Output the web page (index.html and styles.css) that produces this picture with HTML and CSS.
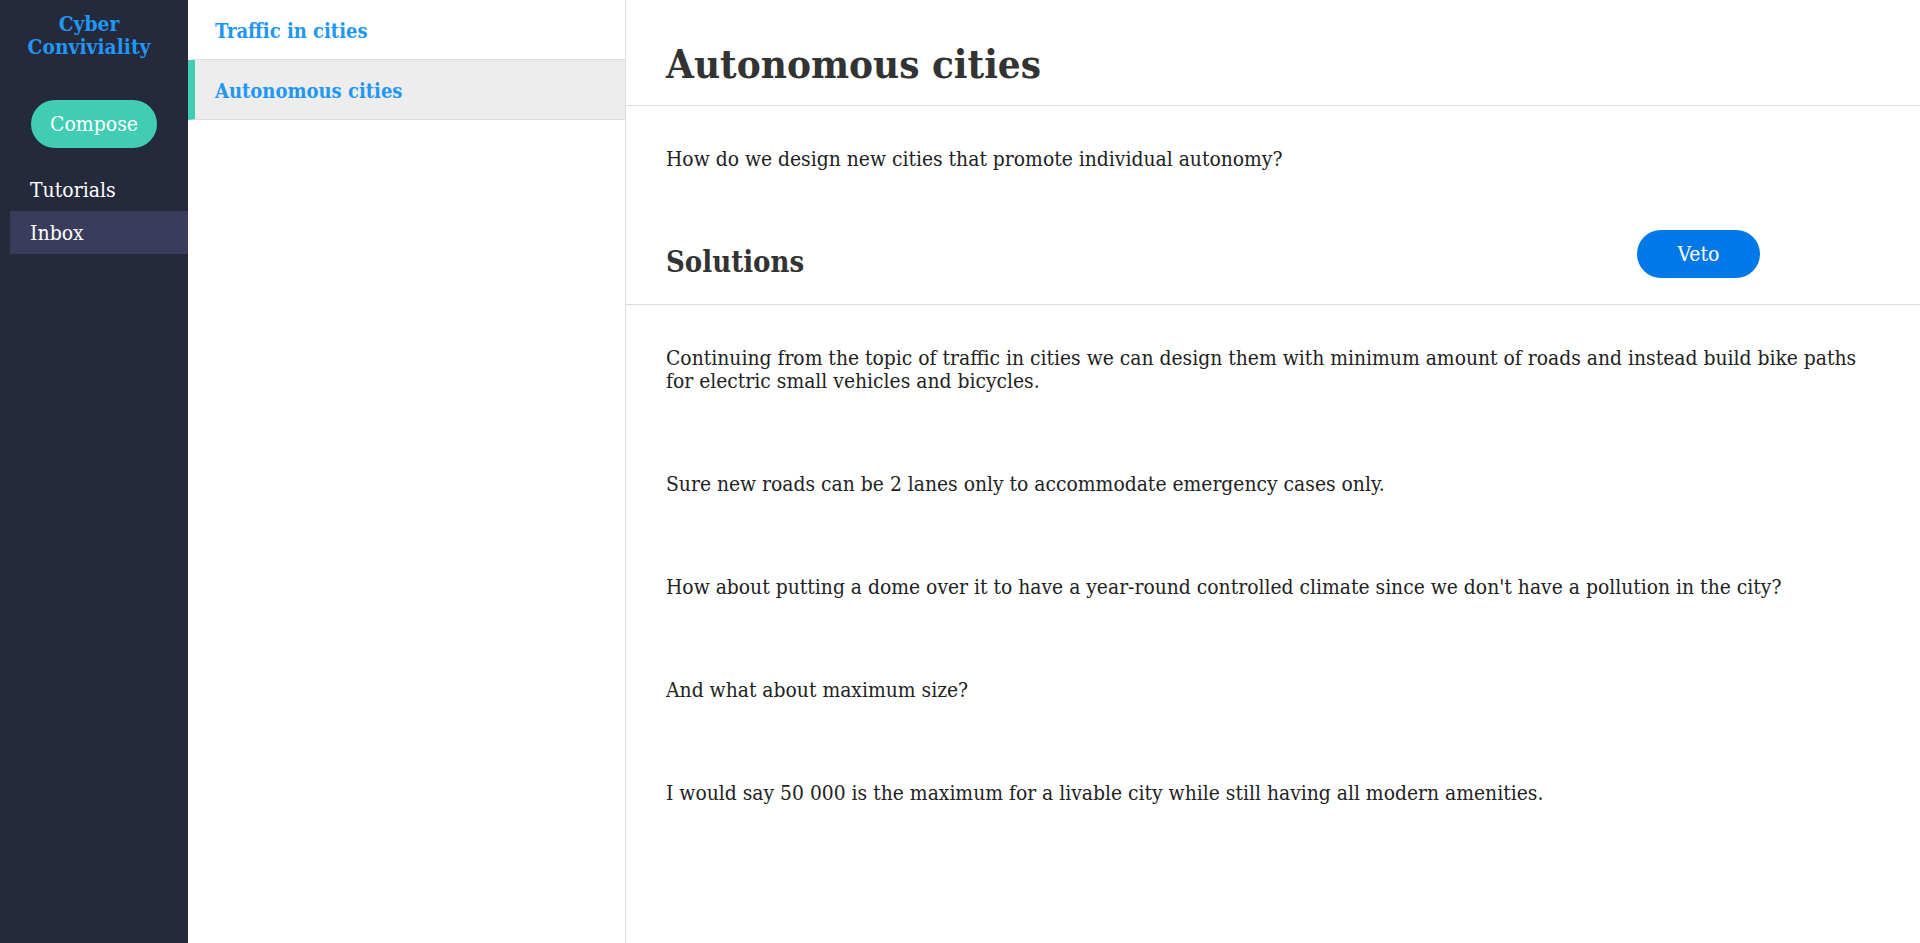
FILE: index.html
```html
<!DOCTYPE html>
<html>
<head>
<meta charset="utf-8">
<link rel="stylesheet" href="styles.css">
</head>
<body>
<div class="app">
  <aside class="sidebar">
    <div class="brand">Cyber<br>Conviviality</div>
    <div class="compose-wrap"><button class="compose">Compose</button></div>
    <nav class="nav">
      <a class="nav-item">Tutorials</a>
      <a class="nav-item active">Inbox</a>
    </nav>
  </aside>
  <section class="list">
    <div class="list-item">Traffic in cities</div>
    <div class="list-item selected">Autonomous cities</div>
  </section>
  <main class="content">
    <header class="content-head"><h1>Autonomous cities</h1></header>
    <p class="para">How do we design new cities that promote individual autonomy?</p>
    <div class="solutions-head">
      <h2>Solutions</h2>
      <button class="veto">Veto</button>
    </div>
    <p class="para">Continuing from the topic of traffic in cities we can design them with minimum amount of roads and instead build bike paths for electric small vehicles and bicycles.</p>
    <p class="para">Sure new roads can be 2 lanes only to accommodate emergency cases only.</p>
    <p class="para">How about putting a dome over it to have a year-round controlled climate since we don't have a pollution in the city?</p>
    <p class="para">And what about maximum size?</p>
    <p class="para">I would say 50 000 is the maximum for a livable city while still having all modern amenities.</p>
  </main>
</div>
</body>
</html>
```

FILE: styles.css
```css
* { box-sizing: border-box; }
html, body { margin: 0; padding: 0; height: 100%; }
body {
  font-family: "DejaVu Serif", "Liberation Serif", serif;
  font-stretch: condensed;
  font-size: 20.85px;
  color: #222;
  background: #fff;
}
.app { display: flex; height: 943px; }

.sidebar {
  width: 188px;
  flex: none;
  background: #242a3b;
}
.brand {
  color: #2196f3;
  font-weight: bold;
  font-size: 20.8px;
  line-height: 23px;
  text-align: center;
  padding: 12px 10px 0 0;
}
.compose-wrap { display: flex; justify-content: center; padding: 42px 0 20px; }
.compose {
  font: inherit;
  font-size: 21px;
  color: #fff;
  background: #40cdb4;
  border: 0;
  border-radius: 24px;
  width: 126px;
  height: 48px;
  padding: 0;
}
.nav { display: flex; flex-direction: column; margin-left: 10px; }
.nav-item {
  color: #fff;
  height: 43px;
  line-height: 44px;
  padding-left: 20px;
  font-size: 21px;
}
.nav-item.active { background: #393c5b; }

.list {
  width: 438px;
  flex: none;
  border-right: 1px solid #ddd;
}
.list-item {
  height: 60px;
  line-height: 62px;
  border-bottom: 1px solid #ddd;
  border-left: 7px solid transparent;
  padding-left: 20px;
  color: #2196f3;
  font-weight: bold;
  font-size: 20px;
}
.list-item.selected { background: #ededed; border-left-color: #40cdb4; }

.content { flex: 1; min-width: 0; }
.content-head {
  padding: 40px 40px 17px;
  border-bottom: 1px solid #ddd;
}
h1 {
  margin: 0;
  font-size: 40px;
  line-height: 48px;
  color: #333;
}
.para {
  margin: 0;
  padding: 42px 40px 38px;
  line-height: 23px;
  color: #222;
}
.solutions-head {
  display: flex;
  justify-content: space-between;
  align-items: flex-start;
  padding: 21px 160px 24px 40px;
  border-bottom: 1px solid #ddd;
}
h2 {
  margin: 15px 0 0;
  font-size: 29px;
  line-height: 35px;
  color: #333;
}
.veto {
  font: inherit;
  font-size: 21px;
  color: #fff;
  background: #0078e7;
  border: 0;
  border-radius: 24px;
  width: 123px;
  height: 48px;
  padding: 0;
}
```
